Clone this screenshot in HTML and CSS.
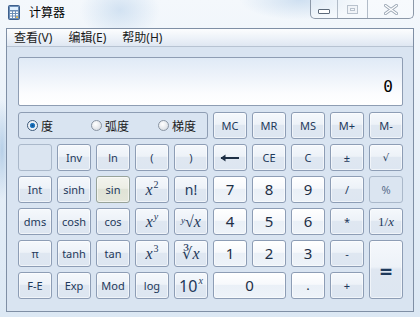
FILE: index.html
```html
<!DOCTYPE html>
<html lang="zh-CN">
<head>
<meta charset="utf-8">
<title>计算器</title>
<link rel="stylesheet" href="styles.css">
</head>
<body>
<div class="frame">
  <div class="titlebar">
    <svg class="app-icon" width="12" height="15" viewBox="0 0 12 15">
      <rect x="0.5" y="0.5" width="11" height="14" rx="1" fill="#6d8fb8" stroke="#3d5f8c"/>
      <rect x="2" y="2" width="8" height="3" fill="#dff0ff"/>
      <rect x="2" y="6.5" width="2" height="1.5" fill="#fff"/>
      <rect x="5" y="6.5" width="2" height="1.5" fill="#fff"/>
      <rect x="8" y="6.5" width="2" height="1.5" fill="#fff"/>
      <rect x="2" y="9" width="2" height="1.5" fill="#fff"/>
      <rect x="5" y="9" width="2" height="1.5" fill="#fff"/>
      <rect x="8" y="9" width="2" height="1.5" fill="#fff"/>
      <rect x="2" y="11.5" width="2" height="1.5" fill="#fff"/>
      <rect x="5" y="11.5" width="2" height="1.5" fill="#fff"/>
      <rect x="8" y="11.5" width="2" height="1.5" fill="#f5c04a"/>
    </svg>
    <span class="title">计算器</span>
    <div class="caption">
      <div class="cap cap-min"><span class="min-bar"></span></div>
      <div class="cap cap-max"><span class="max-box"></span></div>
      <div class="cap cap-close">
        <svg width="14" height="11" viewBox="0 0 14 11">
          <path d="M1.5 1.5 L12.5 9.5 M12.5 1.5 L1.5 9.5" stroke="#9aa6b4" stroke-width="3" stroke-linecap="round"/>
          <path d="M1.5 1.5 L12.5 9.5 M12.5 1.5 L1.5 9.5" stroke="#ffffff" stroke-width="1.4" stroke-linecap="round"/>
        </svg>
      </div>
    </div>
  </div>
  <div class="window">
    <div class="menubar">
      <span class="menu-item">查看(V)</span>
      <span class="menu-item">编辑(E)</span>
      <span class="menu-item">帮助(H)</span>
    </div>
    <div class="content">
      <div class="display"><span class="display-value">0</span></div>
      <div class="keys">
        <div class="radio-group">
          <label class="radio"><span class="radio-dot on"></span>度</label>
          <label class="radio"><span class="radio-dot"></span>弧度</label>
          <label class="radio"><span class="radio-dot"></span>梯度</label>
        </div>
        <div class="btn">MC</div>
        <div class="btn">MR</div>
        <div class="btn">MS</div>
        <div class="btn">M+</div>
        <div class="btn">M-</div>

        <div class="btn disabled"></div>
        <div class="btn">Inv</div>
        <div class="btn">ln</div>
        <div class="btn">(</div>
        <div class="btn">)</div>
        <div class="btn"><svg width="20" height="8" viewBox="0 0 20 8"><path d="M1 4 H19" stroke="#1e2f45" stroke-width="2"/><path d="M0.5 4 L5.5 0.5 L5.5 7.5 Z" fill="#1e2f45"/></svg></div>
        <div class="btn">CE</div>
        <div class="btn">C</div>
        <div class="btn">±</div>
        <div class="btn sqrt">√</div>

        <div class="btn">Int</div>
        <div class="btn">sinh</div>
        <div class="btn hover">sin</div>
        <div class="btn math"><i>x</i><sup>2</sup></div>
        <div class="btn big">n!</div>
        <div class="btn num">7</div>
        <div class="btn num">8</div>
        <div class="btn num">9</div>
        <div class="btn">/</div>
        <div class="btn disabled">%</div>

        <div class="btn">dms</div>
        <div class="btn">cosh</div>
        <div class="btn">cos</div>
        <div class="btn math"><i>x</i><sup><i>y</i></sup></div>
        <div class="btn math"><span class="root-wrap"><sup class="pre"><i>y</i></sup>√</span><i>x</i></div>
        <div class="btn num">4</div>
        <div class="btn num">5</div>
        <div class="btn num">6</div>
        <div class="btn">*</div>
        <div class="btn math-sm">1/<i>x</i></div>

        <div class="btn">π</div>
        <div class="btn">tanh</div>
        <div class="btn">tan</div>
        <div class="btn math"><i>x</i><sup>3</sup></div>
        <div class="btn math">∛<i>x</i></div>
        <div class="btn num">1</div>
        <div class="btn num">2</div>
        <div class="btn num">3</div>
        <div class="btn">-</div>
        <div class="btn eq">=</div>

        <div class="btn">F-E</div>
        <div class="btn">Exp</div>
        <div class="btn">Mod</div>
        <div class="btn">log</div>
        <div class="btn ten">10<sup><i>x</i></sup></div>
        <div class="btn num zero">0</div>
        <div class="btn num dot">.</div>
        <div class="btn">+</div>
      </div>
    </div>
  </div>
</div>
</body>
</html>
```

FILE: styles.css
```css
html, body {
  margin: 0;
  padding: 0;
}
body {
  width: 420px;
  height: 317px;
  overflow: hidden;
  font-family: "Noto Sans", "Noto Sans CJK SC", sans-serif;
  background:
    radial-gradient(ellipse 40px 30px at 120px 10px, rgba(170,200,230,0.45), rgba(170,200,230,0) 100%),
    radial-gradient(ellipse 60px 20px at 300px 0px, rgba(170,200,230,0.5), rgba(170,200,230,0) 100%),
    radial-gradient(ellipse 8px 50px at 2px 150px, rgba(150,185,220,0.6), rgba(150,185,220,0) 100%),
    linear-gradient(180deg, #f4f8fc 0%, #e9f1f9 40%, #dce8f4 100%);
}
.frame {
  display: flex;
  flex-direction: column;
  height: 317px;
}
.titlebar {
  height: 28px;
  display: flex;
  align-items: flex-start;
  padding-left: 8px;
  padding-right: 6px;
  box-sizing: border-box;
}
.app-icon {
  margin-top: 5px;
  flex: none;
}
.title {
  margin-left: 9px;
  margin-top: 5px;
  font-size: 12px;
  line-height: 16px;
  color: #000;
}
.caption {
  margin-left: auto;
  display: flex;
  height: 18px;
  border: 1px solid #8c98a8;
  border-top: none;
  border-radius: 0 0 5px 5px;
  background: rgba(255,255,255,0.25);
}
.cap {
  display: flex;
  align-items: center;
  justify-content: center;
  height: 18px;
}
.cap-min { width: 26px; border-right: 1px solid #b2bcc8; }
.cap-max { width: 29px; border-right: 1px solid #b2bcc8; }
.cap-close { width: 45px; }
.min-bar {
  width: 10px;
  height: 3px;
  border: 1px solid #5d6a7a;
  border-radius: 1px;
  background: #fff;
  margin-top: 4px;
}
.max-box {
  width: 9px;
  height: 7px;
  border: 1px solid #b9c2cd;
  box-shadow: inset 0 0 0 2px #f1f4f8, inset 0 0 0 3px #b9c2cd;
}
.window {
  margin: 0 6px;
  height: 284px;
  box-sizing: border-box;
  border: 1px solid #7f8fa5;
  background: #d9e4f1;
  display: flex;
  flex-direction: column;
}
.menubar {
  height: 18px;
  box-sizing: border-box;
  border-bottom: 1px solid #b7c3d2;
  background: linear-gradient(180deg, #fcfdfe 0%, #eef3f9 50%, #dfe7f2 100%);
  display: flex;
  align-items: center;
  padding-left: 0;
}
.menu-item {
  font-size: 12px;
  line-height: 16px;
  padding: 1px 8px 0 7px;
  margin-right: 1px;
  color: #1b1b1b;
}
.content {
  padding: 10px 10px 0 11px;
}
.display {
  height: 49px;
  box-sizing: border-box;
  border: 1px solid #8e9db3;
  border-radius: 2px;
  background: linear-gradient(180deg, #e0eaf6 0%, #eef3fa 40%, #fbfcfe 75%, #ffffff 100%);
  display: flex;
  align-items: flex-end;
  justify-content: flex-end;
  padding: 0 9px 10px 0;
}
.display-value {
  font-family: "DejaVu Sans Mono", "Liberation Mono", monospace;
  font-size: 16px;
  line-height: 16px;
  color: #000;
}
.keys {
  margin-top: 6px;
  display: grid;
  grid-template-columns: repeat(10, 34px);
  grid-auto-rows: 27px;
  column-gap: 5px;
  row-gap: 5px;
}
.radio-group {
  grid-column: span 5;
  box-sizing: border-box;
  border: 1px solid #8e9db3;
  border-radius: 3px;
  display: grid;
  grid-template-columns: 64px 67px auto;
  align-items: center;
  padding-left: 8px;
}
.radio {
  display: flex;
  align-items: center;
  font-size: 12px;
  color: #1b1b1b;
}
.radio-dot {
  width: 11px;
  height: 11px;
  box-sizing: border-box;
  border-radius: 50%;
  border: 1px solid #8a95a3;
  background: radial-gradient(circle at 40% 35%, #ffffff 0%, #e4e7eb 60%, #c9cfd6 100%);
  margin-right: 3px;
}
.radio-dot.on {
  border-color: #3d5a7a;
  background: radial-gradient(circle at 50% 50%, #0d4a8a 0%, #2b86d0 40%, #e8eef5 46%, #ffffff 100%);
}
.btn {
  box-sizing: border-box;
  border: 1px solid #8d9db5;
  border-radius: 3px;
  background: linear-gradient(180deg, #f5f8fc 0%, #edf2f8 45%, #dfe7f1 50%, #dde6f1 100%);
  box-shadow: inset 0 0 0 1px rgba(255,255,255,0.55);
  display: flex;
  align-items: center;
  justify-content: center;
  font-size: 11px;
  color: #1e395b;
  line-height: 1;
}
.btn.num {
  background: linear-gradient(180deg, #ffffff 0%, #f7f9fc 45%, #eaf0f7 50%, #eef3f9 100%);
  font-size: 15px;
  color: #1e2f45;
}
.btn.hover {
  background: linear-gradient(180deg, #f3f4ee 0%, #eceee4 45%, #e0e3d6 50%, #e3e6da 100%);
  border-color: #97a39a;
}
.btn.disabled {
  background: #dbe5f1;
  border-color: #aab8ca;
  box-shadow: none;
  color: #5a6f8c;
}
.btn.sqrt {
  font-family: "DejaVu Sans", sans-serif;
  font-size: 10px;
}
.btn.big {
  font-size: 14px;
}
.btn.math {
  font-family: "Liberation Serif", "DejaVu Serif", serif;
  font-size: 16px;
}
.btn.math-sm {
  font-family: "Liberation Serif", "DejaVu Serif", serif;
  font-size: 13px;
}
.btn sup {
  font-size: 10px;
  position: relative;
  top: -5px;
  vertical-align: baseline;
  margin-left: 1px;
}
.root-wrap {
  display: inline-flex;
  align-items: baseline;
}
.btn sup.pre {
  margin-left: 0;
  margin-right: 0;
  font-size: 9px;
  top: -4px;
}
.btn.ten {
  font-size: 16px;
}
.btn.ten sup {
  font-family: "Liberation Serif", serif;
  font-size: 10px;
}
.btn.eq {
  grid-row: span 2;
  font-size: 22px;
  font-weight: bold;
}
.btn.zero {
  grid-column: span 2;
}
.btn.dot {
  font-size: 13px;
}
```
